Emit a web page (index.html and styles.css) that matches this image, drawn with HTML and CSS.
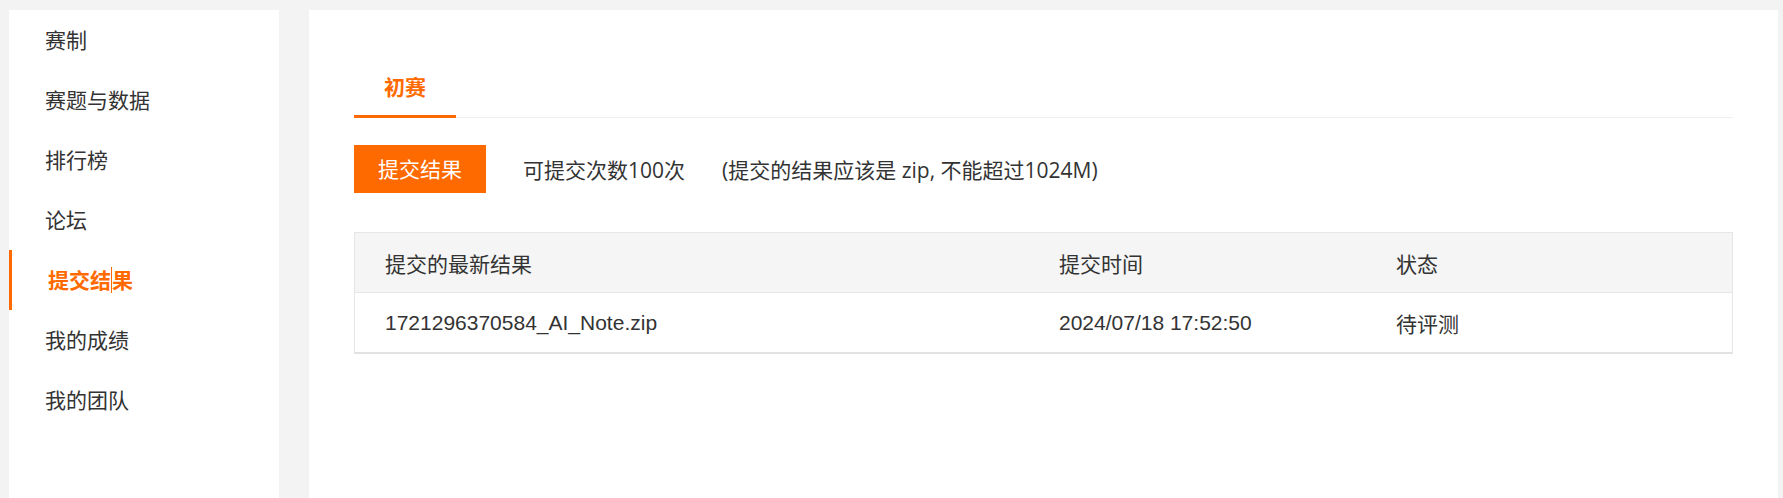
FILE: index.html
```html
<!DOCTYPE html>
<html lang="zh-CN">
<head>
<meta charset="utf-8">
<title>提交结果</title>
<link rel="stylesheet" href="styles.css">
</head>
<body>
<div class="page">
  <aside class="sidebar">
    <ul class="nav">
      <li class="nav-item">赛制</li>
      <li class="nav-item">赛题与数据</li>
      <li class="nav-item">排行榜</li>
      <li class="nav-item">论坛</li>
      <li class="nav-item active">提交结<span class="caret"></span>果</li>
      <li class="nav-item">我的成绩</li>
      <li class="nav-item">我的团队</li>
    </ul>
  </aside>
  <main class="panel">
    <div class="tabs">
      <div class="tab active">初赛</div>
    </div>
    <div class="submit-row">
      <button class="btn">提交结果</button>
      <span class="hint">可提交次数100次</span>
      <span class="hint">(提交的结果应该是 zip, 不能超过1024M)</span>
    </div>
    <div class="table">
      <div class="tr th">
        <div class="td">提交的最新结果</div>
        <div class="td">提交时间</div>
        <div class="td">状态</div>
      </div>
      <div class="tr">
        <div class="td">1721296370584_AI_Note.zip</div>
        <div class="td">2024/07/18 17:52:50</div>
        <div class="td">待评测</div>
      </div>
    </div>
  </main>
</div>
</body>
</html>
```
FILE: styles.css
```css
html, body {
  margin: 0;
  height: 100%;
}
body {
  background: #f3f3f3;
  font-family: "Open Sans", "Noto Sans CJK SC", sans-serif;
  color: #333;
}
.page {
  display: flex;
  gap: 30px;
  padding: 10px 5px 0 9px;
  height: 100%;
  box-sizing: border-box;
}
.sidebar {
  width: 270px;
  flex: none;
  background: #fff;
}
.nav {
  list-style: none;
  margin: 0;
  padding: 0;
}
.nav-item {
  height: 60px;
  line-height: 60px;
  padding-left: 36px;
  font-size: 21px;
  color: #333;
}
.nav-item.active {
  border-left: 3px solid #ff6a00;
  color: #ff6a00;
  font-weight: bold;
}
.caret {
  display: inline-block;
  width: 1px;
  height: 26px;
  background: #ff6a00;
  vertical-align: middle;
  margin-top: -4px;
}
.panel {
  flex: 1;
  background: #fff;
  padding: 49px 45px 0;
}
.tabs {
  display: flex;
  height: 58px;
  border-bottom: 1px solid #eeeeee;
}
.tab {
  height: 56px;
  line-height: 56px;
  padding: 0 30px;
  font-size: 21px;
}
.tab.active {
  color: #ff6a00;
  font-weight: bold;
  border-bottom: 3px solid #ff6a00;
}
.submit-row {
  display: flex;
  align-items: center;
  margin-top: 27px;
}
.btn {
  height: 48px;
  padding: 0 24px;
  border: 0;
  background: #ff6a00;
  color: #fff;
  font-family: inherit;
  font-size: 21px;
  line-height: 48px;
}
.hint {
  margin-left: 37px;
  font-size: 21px;
  color: #333;
}
.table {
  margin-top: 39px;
  border: 1px solid #e6e6e6;
  border-bottom: 2px solid #e2e2e2;
  font-family: "Liberation Sans", "Noto Sans CJK SC", sans-serif;
  font-size: 21px;
  color: #333;
}
.tr {
  display: grid;
  grid-template-columns: 674px 337px 1fr;
  align-items: center;
  height: 59px;
}
.th {
  background: #f5f5f5;
  border-bottom: 1px solid #e6e6e6;
}
.td {
  padding-left: 30px;
}
```
